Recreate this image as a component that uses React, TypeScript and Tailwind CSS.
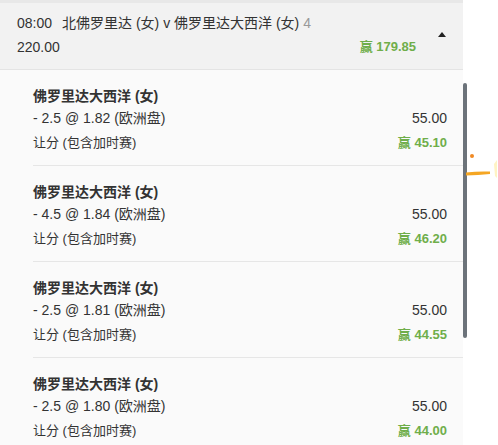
import React from "react";

const items = [
  { line: "- 2.5 @ 1.82 (欧洲盘)", win: "45.10" },
  { line: "- 4.5 @ 1.84 (欧洲盘)", win: "46.20" },
  { line: "- 2.5 @ 1.81 (欧洲盘)", win: "44.55" },
  { line: "- 2.5 @ 1.80 (欧洲盘)", win: "44.00" },
];

export default function App() {
  return (
    <div
      className="relative w-[498px] h-[445px] overflow-hidden bg-white text-[#333]"
      style={{ fontFamily: '"Liberation Sans", Arial, "Noto Sans CJK SC", sans-serif' }}
    >
      <div className="w-[463px] h-full bg-[#fafafa]">
        <div className="h-[3px] bg-[#e8e8e8]" />
        <div className="flex bg-[#f2f2f2] border-b border-[#e4e4e4] pt-[8px] pb-[10px] pl-[17px]">
          <div className="flex-1 text-[14px] leading-[24px]">
            <div className="flex">
              <span>08:00</span>
              <span className="ml-[10px]">北佛罗里达 (女) v 佛罗里达大西洋 (女)</span>
              <span className="ml-[4px] text-[#999]">4</span>
            </div>
            <div className="flex justify-between">
              <span>220.00</span>
              <span className="text-[13px] font-bold text-[#6fae4a]">赢 179.85</span>
            </div>
          </div>
          <div className="w-[47px] flex items-center justify-center pl-[5px]">
            <svg width="8" height="5" viewBox="0 0 8 5" className="mb-[1px]">
              <path d="M0 5 L4 0 L8 5 Z" fill="#222" />
            </svg>
          </div>
        </div>
        <div className="relative">
          {items.map((it, i) => (
            <div key={i} className="ml-[33px] border-b border-[#e6e6e6] pt-[15px] pb-[9px] pr-[16px]">
              <div className="text-[14px] font-bold leading-[22px]">佛罗里达大西洋 (女)</div>
              <div className="flex justify-between text-[14px] leading-[23px]">
                <span>{it.line}</span>
                <span>55.00</span>
              </div>
              <div className="flex justify-between text-[13px] leading-[26px]">
                <span>让分 (包含加时赛)</span>
                <span className="font-bold text-[#6fae4a]">赢 {it.win}</span>
              </div>
            </div>
          ))}
        </div>
      </div>
      <div className="absolute left-[463px] top-[83px] w-[4px] h-[255px] rounded-[2px] bg-[#6c737a]" />
      <svg className="absolute left-[464px] top-[148px]" width="34" height="32" viewBox="0 0 34 32">
        <circle cx="8" cy="8" r="2" fill="#f08a24" />
        <path d="M2 24.5 Q14 23 26 23.5 L26 26 Q14 27 2 27.5 Z" fill="#f5a623" />
        <path d="M30 16 L33 12 L33 30 L31 28 Z" fill="#fff3c4" />
      </svg>
    </div>
  );
}
